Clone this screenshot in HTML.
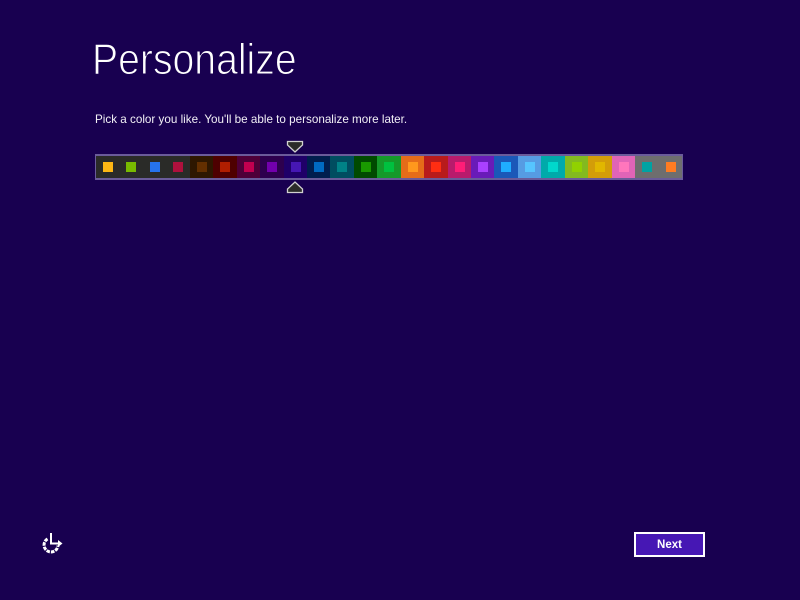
<!DOCTYPE html>
<html>
<head>
<meta charset="utf-8">
<style>
html,body{margin:0;padding:0;width:800px;height:600px;overflow:hidden;background:#180050;}
body{position:relative;font-family:"Liberation Sans",sans-serif;color:#fff;}
h1{position:absolute;left:92px;top:35px;margin:0;font-weight:400;font-size:44px;line-height:50px;white-space:nowrap;-webkit-text-stroke:1.1px #180050;transform:scaleX(0.89);transform-origin:0 0;}
p{position:absolute;left:95px;top:112px;margin:0;font-size:12px;line-height:15px;white-space:nowrap;color:#f2f0f6;transform:scaleX(0.972);transform-origin:0 0;}
#bar{position:absolute;left:95px;top:154px;width:586px;height:22px;border:solid #6a5b9a;border-width:2px 1px;display:flex;}
#bar div{flex:1 1 0;position:relative;}
#bar i{position:absolute;left:7px;top:6px;width:10px;height:10px;display:block;}
#next{position:absolute;left:634px;top:532px;width:67px;height:21px;border:2px solid #fff;background:#4617b4;font-size:11.5px;font-weight:bold;line-height:23px;text-align:center;}
svg{position:absolute;display:block;}
</style>
</head>
<body>
<h1>Personalize</h1>
<p>Pick a color you like. You'll be able to personalize more later.</p>

<div id="bar">
<div style="background:#2a2b28"><i style="background:#fcb714"></i></div>
<div style="background:#2a2b28"><i style="background:#78ba00"></i></div>
<div style="background:#2a2b28"><i style="background:#2673ec"></i></div>
<div style="background:#2a2b28"><i style="background:#ae113d"></i></div>
<div style="background:#2e1700"><i style="background:#632f00"></i></div>
<div style="background:#4e0000"><i style="background:#b01e00"></i></div>
<div style="background:#4e0038"><i style="background:#c1004f"></i></div>
<div style="background:#2d004e"><i style="background:#7200ac"></i></div>
<div style="background:#1f0068"><i style="background:#4617b4"></i></div>
<div style="background:#001e4e"><i style="background:#006ac1"></i></div>
<div style="background:#004d60"><i style="background:#008287"></i></div>
<div style="background:#004a00"><i style="background:#199900"></i></div>
<div style="background:#15992a"><i style="background:#00c13f"></i></div>
<div style="background:#e56c19"><i style="background:#ff981d"></i></div>
<div style="background:#b81b1b"><i style="background:#ff2e12"></i></div>
<div style="background:#b81b6c"><i style="background:#ff1d77"></i></div>
<div style="background:#691bb8"><i style="background:#aa40ff"></i></div>
<div style="background:#1b58b8"><i style="background:#1fadff"></i></div>
<div style="background:#569ce3"><i style="background:#56c5ff"></i></div>
<div style="background:#00aaaa"><i style="background:#00d8cc"></i></div>
<div style="background:#83ba1f"><i style="background:#91d100"></i></div>
<div style="background:#d39d09"><i style="background:#e1b700"></i></div>
<div style="background:#e064b7"><i style="background:#ff76bc"></i></div>
<div style="background:#6e6e6e"><i style="background:#00a3a3"></i></div>
<div style="background:#6e6e6e"><i style="background:#fe7c22"></i></div>
</div>

<svg style="left:286px;top:140px" width="18" height="14" viewBox="0 0 18 14">
<path d="M1.5 1.5H16.5V5L9 12L1.5 5Z" fill="#2a2b28" stroke="#d0d0d0" stroke-width="1.3"/>
</svg>
<svg style="left:286px;top:180px" width="18" height="14" viewBox="0 0 18 14">
<path d="M1.5 12.5H16.5V9L9 2L1.5 9Z" fill="#2a2b28" stroke="#d0d0d0" stroke-width="1.3"/>
</svg>

<svg style="left:40px;top:532px" width="24" height="24" viewBox="0 0 24 24">
<path d="M7.5 6.9A7 7 0 1 0 18 13.5" fill="none" stroke="#fff" stroke-width="3" stroke-dasharray="3.5 1"/>
<path d="M11 1V11.5H19" fill="none" stroke="#fff" stroke-width="2"/>
<path d="M18 8L22.5 11.5L18 15Z" fill="#fff"/>
</svg>

<div id="next">Next</div>
</body>
</html>
